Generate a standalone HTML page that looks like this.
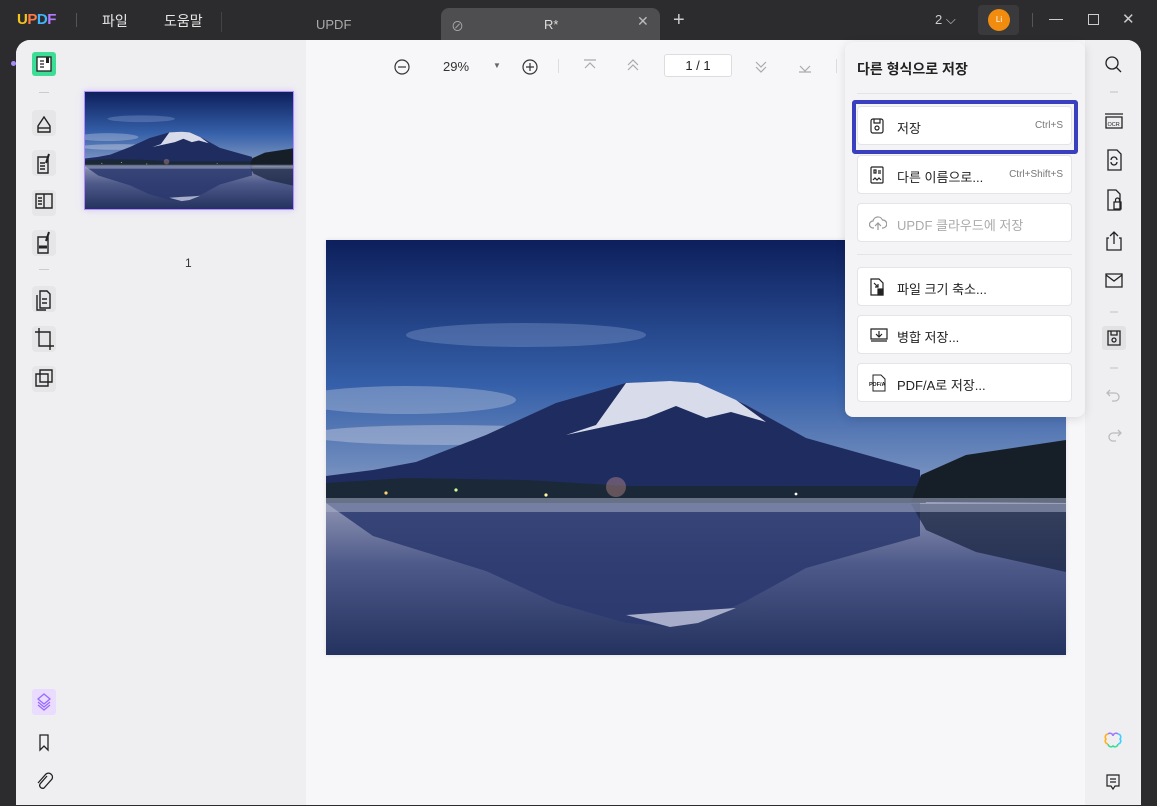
<!DOCTYPE html>
<html><head><meta charset="utf-8"><style>
*{margin:0;padding:0;box-sizing:border-box}
html,body{width:1157px;height:806px;overflow:hidden}
body{background:#2c2c2e;font-family:"Liberation Sans","Noto Sans CJK KR",sans-serif;position:relative}
.abs{position:absolute}
.t{color:#e8e8e8;font-size:14px}
.win{left:16px;top:40px;width:1125px;height:765px;background:#f7f7f9;border-radius:14px 14px 0 0;overflow:hidden}
.menu{left:845px;top:42px;width:240px;height:375px;background:#f4f4f6;border-radius:8px;box-shadow:0 2px 10px rgba(0,0,0,.12)}
.it{position:absolute;left:12px;width:215px;height:39px;background:#fff;border:1px solid #e4e4e8;border-radius:4px;font-size:13px;color:#222}
.it .l{position:absolute;left:39px;top:11px}
.it .r{position:absolute;right:8px;top:13px;font-size:10px;color:#777}
.it svg{position:absolute;left:11px;top:10px}
</style></head><body>
<svg width="0" height="0" style="position:absolute;left:0;top:0"><defs>
<linearGradient id="sky" x1="0" y1="0" x2="0" y2="1"><stop offset="0" stop-color="#0d1f5c"/><stop offset=".55" stop-color="#3560a9"/><stop offset="1" stop-color="#8a9fc6"/></linearGradient>
<linearGradient id="wat" x1="0" y1="0" x2="0" y2="1"><stop offset="0" stop-color="#8e94b2"/><stop offset=".4" stop-color="#4e5a8a"/><stop offset="1" stop-color="#24325f"/></linearGradient>
<symbol id="scene" viewBox="0 0 740 415" preserveAspectRatio="none">
<rect width="740" height="264" fill="url(#sky)"/>
<ellipse cx="200" cy="95" rx="120" ry="12" fill="#8aa3d0" opacity=".35"/>
<ellipse cx="80" cy="160" rx="110" ry="14" fill="#b9c6de" opacity=".4"/>
<ellipse cx="120" cy="195" rx="140" ry="10" fill="#c6cde0" opacity=".45"/>
<rect y="263" width="740" height="152" fill="url(#wat)"/>
<polygon points="0,236 47,230 90,222 160,195 230,163 300,143 344,141 372,143 420,165 480,198 594,230 594,263 0,263" fill="#1f2c60"/>
<polygon points="240,195 270,185 300,143 344,141 372,143 410,160 440,182 405,172 380,178 350,166 320,178" fill="#d8dcea"/>
<polygon points="0,243 80,238 200,240 300,246 594,246 600,263 0,263" fill="#1b2838"/>
<polygon points="585,262 595,235 640,215 740,200 740,263" fill="#161f28"/>
<polygon points="0,263 47,296 160,331 230,363 300,383 344,387 372,383 420,361 480,328 594,296 594,263" fill="#2a386e" opacity=".85"/>
<polygon points="300,375 344,387 372,383 410,368 380,370 344,372" fill="#c8cce0" opacity=".8"/>
<polygon points="585,264 740,264 740,332 650,312 600,290" fill="#1f2a48" opacity=".8"/>
<rect y="258" width="740" height="14" fill="#a8aec8" opacity=".55"/>
<circle cx="60" cy="253" r="1.6" fill="#ffd070"/><circle cx="130" cy="250" r="1.6" fill="#c8ff90"/><circle cx="220" cy="255" r="1.6" fill="#fff6a0"/><circle cx="290" cy="247" r="10" fill="#e8a59a" opacity=".35"/><circle cx="470" cy="254" r="1.4" fill="#fff"/>
</symbol>
</defs></svg>

<!-- title bar -->
<div class="abs" style="left:17px;top:11px;font-weight:bold;font-size:15px;letter-spacing:-0.5px"><span style="color:#f5c518">U</span><span style="color:#ff7a45">P</span><span style="color:#40b6ff">D</span><span style="color:#b57bff">F</span></div>
<div class="abs" style="left:76px;top:13px;width:1px;height:14px;background:#555"></div>
<div class="abs t" style="left:102px;top:11px">파일</div>
<div class="abs t" style="left:164px;top:11px">도움말</div>
<div class="abs" style="left:221px;top:12px;width:1px;height:20px;background:#444"></div>
<div class="abs" style="left:316px;top:17px;color:#aaa;font-size:13px">UPDF</div>
<div class="abs" style="left:441px;top:8px;width:219px;height:32px;background:#4e4e50;border-radius:8px 8px 0 0"></div>
<div class="abs" style="left:451px;top:16px;color:#aaa;font-size:13px">⊘</div>
<div class="abs" style="left:544px;top:17px;color:#ddd;font-size:13px">R*</div>
<div class="abs" style="left:637px;top:13px;color:#bbb;font-size:14px">✕</div>
<div class="abs" style="left:673px;top:9px;color:#ccc;font-size:20px">+</div>
<div class="abs" style="left:935px;top:12px;color:#ccc;font-size:13px">2 ⌵</div>
<div class="abs" style="left:978px;top:5px;width:41px;height:30px;background:#3a3a3c;border-radius:4px"></div>
<div class="abs" style="left:988px;top:9px;width:22px;height:22px;border-radius:50%;background:#f28c0f;color:#fff;font-size:8px;text-align:center;line-height:22px">Li</div>
<div class="abs" style="left:1032px;top:13px;width:1px;height:14px;background:#555"></div>
<div class="abs" style="left:1049px;top:19px;width:14px;height:1px;background:#ccc"></div>
<div class="abs" style="left:1088px;top:14px;width:11px;height:11px;border:1px solid #ccc"></div>
<div class="abs" style="left:1122px;top:10px;color:#ccc;font-size:15px">✕</div>

<div class="abs win">
 <div class="abs" style="left:0;top:0;width:54px;height:765px;background:#efeff1"></div>
 <div class="abs" style="left:54px;top:0;width:236px;height:765px;background:#efeff2"></div>
 <div class="abs" style="left:1069px;top:0;width:56px;height:765px;background:#efeff1"></div>
</div>
<div class="abs" style="left:11px;top:61px;width:5px;height:5px;border-radius:50%;background:#a78bfa"></div>
<!-- left icons -->
<div class="abs" style="left:32px;top:52px;width:24px;height:24px;background:#3ddc97;border-radius:3px"><svg width="24" height="24"><rect x="5" y="5" width="14" height="14" fill="#fff" stroke="#222" stroke-width="1.3"/><path d="M8 9h4M8 12h4M8 15h4" stroke="#222" stroke-width="1.3"/><rect x="14" y="5" width="3" height="6" fill="#222"/></svg></div>
<div class="abs" style="left:39px;top:92px;width:10px;height:1px;background:#ccc"></div>
<div class="abs" style="left:39px;top:269px;width:10px;height:1px;background:#ccc"></div>
<svg class="abs" style="left:30px;top:110px" width="28" height="300" fill="none" stroke="#222" stroke-width="1.4">
<rect x="2" y="0" width="24" height="26" rx="4" fill="#e6e6e8" stroke="none"/>
<path d="M8 22v-6l6-9 6 9v6z"/><path d="M8 18h12" />
<rect x="2" y="40" width="24" height="26" rx="4" fill="#e6e6e8" stroke="none"/>
<path d="M8 47h10v16H8z M10 53h5M10 56h5M10 59h5"/><path d="M19 44l-3 9" stroke-width="2"/>
<rect x="2" y="80" width="24" height="26" rx="4" fill="#e6e6e8" stroke="none"/>
<path d="M6 84h16v14H6z M14 84v14 M8 88h4M8 91h4M8 94h4"/>
<rect x="2" y="120" width="24" height="26" rx="4" fill="#e6e6e8" stroke="none"/>
<path d="M8 127h10v16H8z"/><path d="M9 137h8" stroke-width="3"/><path d="M19 122l-3 9" stroke-width="2"/>
<rect x="2" y="176" width="24" height="26" rx="4" fill="#e6e6e8" stroke="none"/>
<path d="M10 181h7l3 3v14H10z M7 185v15h9 M12 189h5M12 193h5"/>
<rect x="2" y="216" width="24" height="26" rx="4" fill="#e6e6e8" stroke="none"/>
<path d="M9 218v18h15 M5 222h15v18"/>
<rect x="2" y="256" width="24" height="26" rx="4" fill="#e6e6e8" stroke="none"/>
<path d="M10 260h12v12H10z M6 264h12v12H6z"/>
</svg>
<div class="abs" style="left:32px;top:689px;width:24px;height:26px;background:#e9dcff;border-radius:3px"><svg width="24" height="26" fill="none" stroke="#9b6bff" stroke-width="1.3"><path d="M12 5l6 5-6 5-6-5z M6 13l6 5 6-5 M6 16l6 5 6-5"/></svg></div>
<svg class="abs" style="left:34px;top:732px" width="20" height="62" fill="none" stroke="#222" stroke-width="1.3"><path d="M6 3h8v15l-4-4-4 4z"/><path d="M13 44l-7 8a3 3 0 0 0 4 4l8-9a4 4 0 0 0-6-5l-8 9"/></svg>
<!-- thumbnail -->
<div class="abs" style="left:84px;top:91px;width:210px;height:119px;border:1px solid #b38cff;box-shadow:0 0 6px rgba(170,130,255,.4)"><svg width="208" height="117" style="display:block"><use href="#scene" width="208" height="117"/></svg></div>
<div class="abs" style="left:185px;top:256px;font-size:12px;color:#333">1</div>
<!-- top toolbar -->
<svg class="abs" style="left:393px;top:57px" width="150" height="20" fill="none" stroke="#333" stroke-width="1.2"><circle cx="9" cy="10" r="7"/><path d="M5 10h8"/><circle cx="137" cy="10" r="7"/><path d="M133 10h8M137 6v8"/></svg>
<div class="abs" style="left:443px;top:59px;font-size:13px;color:#333">29%</div>
<div class="abs" style="left:493px;top:61px;font-size:8px;color:#666">▼</div>
<div class="abs" style="left:558px;top:59px;width:1px;height:14px;background:#ddd"></div>
<svg class="abs" style="left:580px;top:56px" width="240" height="20" fill="none" stroke="#aaa" stroke-width="1.2"><path d="M4 4h12M5 12l5-5 5 5"/><path d="M48 9l5-5 5 5M48 14l5-5 5 5"/><path d="M176 6l5 5 5-5M176 11l5 5 5-5"/><path d="M220 10l5 5 5-5M219 16h12"/></svg>
<div class="abs" style="left:664px;top:54px;width:68px;height:23px;border:1px solid #ddd;background:#fff;border-radius:3px;font-size:13px;color:#222;text-align:center;line-height:21px">1 / 1</div>
<div class="abs" style="left:836px;top:59px;width:1px;height:14px;background:#ddd"></div>
<!-- page image -->
<div class="abs" style="left:326px;top:240px;width:740px;height:415px;box-shadow:0 0 4px rgba(0,0,0,.1)"><svg width="740" height="415" style="display:block"><use href="#scene" width="740" height="415"/></svg></div>
<!-- right toolbar -->
<svg class="abs" style="left:1101px;top:52px" width="26" height="400" fill="none" stroke="#222" stroke-width="1.3">
<circle cx="11" cy="11" r="6"/><path d="M15 15l5 5"/>
<path d="M9 40h8" stroke="#ccc"/>
<path d="M4 62h18 M5 65h16v11H5z"/><text x="6.5" y="74" font-size="5.5" fill="#222" stroke="none" font-family="Liberation Sans">OCR</text>
<path d="M7 98h9l4 4v16H7z M10 108a3 3 0 0 1 6 0M16 110a3 3 0 0 1-6 0"/>
<path d="M7 138h8l4 4v16H7z M13 150h7v7h-7z M14.5 150v-2a2 2 0 0 1 4 0v2"/>
<path d="M13 180v12M9 184l4-4 4 4M8 186H6v12h14v-12h-2"/>
<path d="M5 222h16v13H5z M5 223l8 6 8-6"/>
<path d="M9 260h8" stroke="#ccc"/>
<rect x="1" y="274" width="24" height="24" rx="3" fill="#e2e2e4" stroke="none"/>
<path d="M7 279h12v14H7z M10 279v4h6v-4"/><circle cx="13" cy="288" r="2"/>
<path d="M9 316h8" stroke="#ccc"/>
<path d="M9 338l-3 3 3 3M6 341h8a4 4 0 0 1 0 8h-3" stroke="#bbb"/>
<path d="M17 378l3 3-3 3M20 381h-8a4 4 0 0 0 0 8h3" stroke="#bbb"/>
</svg>
<svg class="abs" style="left:1103px;top:731px" width="20" height="62" fill="none" stroke-width="1.6"><path d="M5 3a3 3 0 0 1 5 2a3 3 0 0 1 5-2" stroke="#a07bff"/><path d="M15 3a3 3 0 0 1 2 5a3 3 0 0 1-2 5" stroke="#3cd0ff"/><path d="M15 13a3 3 0 0 1-5 2a3 3 0 0 1-5-2" stroke="#3ddc97"/><path d="M5 13a3 3 0 0 1-2-5a3 3 0 0 1 2-5" stroke="#ffb020"/><path d="M4 44h12v11h-4l-2 3-2-3H4z M7 48h6M7 51h6" stroke="#222" stroke-width="1.2"/></svg>

<!-- dropdown -->
<div class="abs menu">
 <div class="abs" style="left:12px;top:17px;font-size:14px;font-weight:bold;color:#222">다른 형식으로 저장</div>
 <div class="abs" style="left:12px;top:51px;width:215px;height:1px;background:#e4e4e8"></div>
 <div class="abs" style="left:7px;top:58px;width:226px;height:54px;border:4px solid #3a3fbf;border-radius:3px"></div>
 <div class="it" style="top:64px"><svg width="16" height="18" fill="none" stroke="#222" stroke-width="1.2"><rect x="2" y="2" width="12" height="14" rx="2"/><path d="M5 2v4h6V2"/><circle cx="8" cy="11" r="2"/></svg><span class="l">저장</span><span class="r">Ctrl+S</span></div>
 <div class="it" style="top:113px"><svg width="16" height="18" fill="none" stroke="#222" stroke-width="1.2"><rect x="2" y="1" width="12" height="16" rx="1"/><path d="M5 4h2v3H5zM9 5h3M9 7h3M4 14l2-2 2 2 2-2 2 2"/></svg><span class="l">다른 이름으로...</span><span class="r">Ctrl+Shift+S</span></div>
 <div class="it" style="top:161px"><svg width="18" height="18" fill="none" stroke="#999" stroke-width="1.2"><path d="M5 14H4a3.5 3.5 0 0 1 0-7a5 5 0 0 1 9.5-1a3.5 3.5 0 0 1 .5 8h-1M9 16V9M6 12l3-3 3 3"/></svg><span class="l" style="color:#aaa">UPDF 클라우드에 저장</span></div>
 <div class="abs" style="left:12px;top:212px;width:215px;height:1px;background:#e4e4e8"></div>
 <div class="it" style="top:225px"><svg width="16" height="18" fill="none" stroke="#222" stroke-width="1.2"><path d="M2 1h8l4 4v12H2z M5 5l4 4M9 6v3H6"/><rect x="9" y="11" width="5" height="6" fill="#222"/></svg><span class="l">파일 크기 축소...</span></div>
 <div class="it" style="top:273px"><svg width="20" height="18" fill="none" stroke="#222" stroke-width="1.2"><path d="M2 3h16v10H2z M2 15h16 M10 5v6M7 8l3 3 3-3"/></svg><span class="l">병합 저장...</span></div>
 <div class="it" style="top:321px"><svg width="20" height="18" fill="none" stroke="#222" stroke-width="1"><path d="M4 1h8l4 4v12H4z"/><text x="0" y="12" font-size="5.5" fill="#222" stroke="none" font-family="Liberation Sans" font-weight="bold">PDF/A</text></svg><span class="l">PDF/A로 저장...</span></div>
</div>
</body></html>
